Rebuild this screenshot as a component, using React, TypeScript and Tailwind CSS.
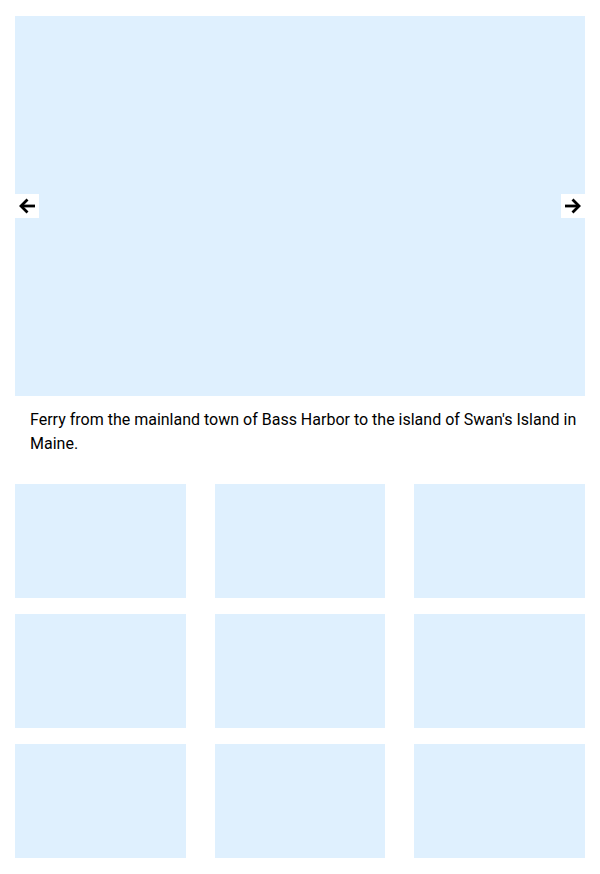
const thumbs = [1, 2, 3, 4, 5, 6, 7, 8, 9];

function Arrow({ dir }: { dir: "left" | "right" }) {
  return (
    <svg
      viewBox="0 0 24 24"
      className={"h-6 w-6" + (dir === "right" ? " rotate-180" : "")}
      fill="none"
      stroke="#000"
      strokeWidth={2.8}
      strokeLinejoin="miter"
    >
      <path d="M20 12H6" />
      <path d="M12.5 5.5L6 12l6.5 6.5" />
    </svg>
  );
}

export default function App() {
  return (
    <div className="w-[600px] min-h-[874px] bg-white px-[15px] pt-4 font-['Roboto',sans-serif]">
      <div className="relative h-[380px] bg-[#dff0fe]">
        <button className="absolute left-0 top-[178px] flex h-6 w-6 items-center justify-center bg-white">
          <Arrow dir="left" />
        </button>
        <button className="absolute right-0 top-[178px] flex h-6 w-6 items-center justify-center bg-white">
          <Arrow dir="right" />
        </button>
      </div>
      <p className="mt-3 pl-[15px] pr-[8px] text-base leading-6 text-black">
        Ferry from the mainland town of Bass Harbor to the island of Swan's Island in Maine.
      </p>
      <div className="mt-7 grid grid-cols-3 gap-x-[29px] gap-y-4">
        {thumbs.map((t) => (
          <div key={t} className="h-[114px] bg-[#dff0fe]" />
        ))}
      </div>
    </div>
  );
}
